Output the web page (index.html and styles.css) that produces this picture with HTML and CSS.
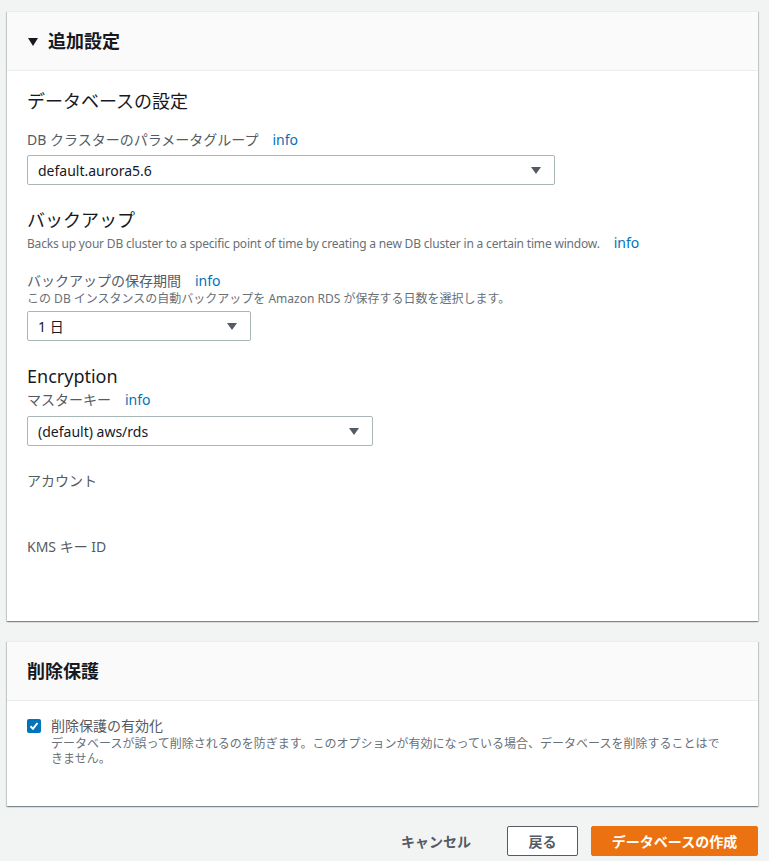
FILE: index.html
```html
<!DOCTYPE html>
<html lang="ja">
<head>
<meta charset="utf-8">
<title>追加設定</title>
<link rel="stylesheet" href="styles.css">
</head>
<body>
<div class="page">
  <section class="card">
    <header class="card-head">
      <svg class="caret" width="10" height="8" viewBox="0 0 10 8"><path d="M0 0H10L5 8Z" fill="#16191f"/></svg>
      <h2>追加設定</h2>
    </header>
    <div class="card-body first">
      <h3 class="sec">データベースの設定</h3>
      <div class="label gap-l">DB クラスターのパラメータグループ<a class="info">info</a></div>
      <div class="select w-full"><span>default.aurora5.6</span><svg width="10" height="7" viewBox="0 0 10 7"><path d="M0 0H10L5 7Z" fill="#545b64"/></svg></div>

      <h3 class="sec gap-xl">バックアップ</h3>
      <div class="desc en gap-s">Backs up your DB cluster to a specific point of time by creating a new DB cluster in a certain time window.<a class="info">info</a></div>
      <div class="label gap-m">バックアップの保存期間<a class="info">info</a></div>
      <div class="desc">この DB インスタンスの自動バックアップを Amazon RDS が保存する日数を選択します。</div>
      <div class="select w-small"><span>1 日</span><svg width="10" height="7" viewBox="0 0 10 7"><path d="M0 0H10L5 7Z" fill="#545b64"/></svg></div>

      <h3 class="sec gap-xl">Encryption</h3>
      <div class="label gap-xs">マスターキー<a class="info">info</a></div>
      <div class="select w-mid"><span>(default) aws/rds</span><svg width="10" height="7" viewBox="0 0 10 7"><path d="M0 0H10L5 7Z" fill="#545b64"/></svg></div>

      <div class="label gap-acct">アカウント</div>
      <div class="value"></div>
      <div class="label gap-kms">KMS キー ID</div>
      <div class="value"></div>
    </div>
  </section>

  <section class="card second">
    <header class="card-head">
      <h2>削除保護</h2>
    </header>
    <div class="card-body check-body">
      <div class="check-row">
        <span class="checkbox"><svg width="14" height="14" viewBox="0 0 14 14"><path d="M3.5 7.2L6 9.8L10.5 4" fill="none" stroke="#fff" stroke-width="2"/></svg></span>
        <div class="check-text">
          <div class="check-label">削除保護の有効化</div>
          <div class="check-desc">データベースが誤って削除されるのを防ぎます。このオプションが有効になっている場合、データベースを削除することはできません。</div>
        </div>
      </div>
    </div>
  </section>

  <footer class="actions">
    <button class="btn link">キャンセル</button>
    <button class="btn normal">戻る</button>
    <button class="btn primary">データベースの作成</button>
  </footer>
</div>
</body>
</html>
```
FILE: styles.css
```css
* { box-sizing: border-box; }
html, body { margin: 0; padding: 0; }
body {
  background: #f2f3f3;
  font-family: "Noto Sans", "Noto Sans CJK JP", sans-serif;
  color: #16191f;
  font-size: 14px;
}
.page {
  padding: 11px 11px 0 7px;
}
.card {
  background: #fff;
  border-top: 1px solid #eaeded;
  box-shadow: 0 1px 1px 0 rgba(0,28,36,.3), 1px 1px 1px 0 rgba(0,28,36,.15), -1px 1px 1px 0 rgba(0,28,36,.15);
}
.card.second { margin-top: 20px; }
.card-head {
  height: 59px;
  background: #fafafa;
  border-bottom: 1px solid #eaeded;
  display: flex;
  align-items: center;
  padding: 0 20px;
}
.caret { margin: 1px 10px 0 1px; }
.card-head h2 {
  margin: 0;
  font-size: 18px;
  font-weight: 700;
  line-height: 24px;
}
.card-body { padding: 18px 20px 64px 20px; }
.sec {
  margin: 0;
  font-size: 18px;
  font-weight: 400;
  line-height: 24px;
  color: #16191f;
}
.label {
  font-size: 14px;
  line-height: 20px;
  color: #545b64;
}
.info {
  color: #0073bb;
  margin-left: 14px;
  font-size: 14px;
  letter-spacing: 0;
}
.desc {
  font-size: 12px;
  line-height: 16px;
  color: #687078;
}
.desc.en { letter-spacing: -0.18px; }
.gap-xs { margin-top: 2px; }
.gap-s { margin-top: 3px; }
.gap-m { margin-top: 19px; }
.gap-l { margin-top: 17px; }
.gap-xl { margin-top: 23px; }
.gap-acct { margin-top: 25px; }
.gap-kms { margin-top: 46px; }
.select {
  margin-top: 5px;
  height: 30px;
  border: 1px solid #aab7b8;
  border-radius: 2px;
  display: flex;
  align-items: center;
  justify-content: space-between;
  padding: 0 13px 0 10px;
  font-size: 14px;
  color: #16191f;
}
.w-full { width: 528px; }
.w-small { width: 224px; margin-top: 4px; }
.w-mid { width: 346px; margin-top: 6px; }
.check-body { padding: 15px 20px 40px 20px; }
.check-row { display: flex; align-items: flex-start; }
.checkbox {
  width: 14px;
  height: 14px;
  margin-top: 3px;
  background: #0073bb;
  border-radius: 2px;
  display: flex;
  flex: none;
}
.check-text { margin-left: 10px; width: 676px; }
.check-label { font-size: 14px; line-height: 20px; color: #545b64; }
.check-desc { font-size: 12px; line-height: 15px; color: #687078; }
.actions {
  display: flex;
  justify-content: flex-end;
  align-items: center;
  padding: 20px 0 0 0;
  gap: 13px;
}
.btn {
  font-family: "Noto Sans", "Noto Sans CJK JP", sans-serif;
  font-weight: 700;
  font-size: 14px;
  height: 30px;
  border-radius: 2px;
  padding: 0 10px;
  white-space: nowrap;
  cursor: pointer;
}
.link {
  background: transparent;
  border: none;
  color: #545b64;
  padding: 0 20px;
  margin-right: 3px;
}
.normal {
  background: #fff;
  border: 1px solid #545b64;
  color: #545b64;
  width: 71px;
}
.primary {
  background: #ec7211;
  border: 1px solid #ec7211;
  color: #fff;
  width: 167px;
}
```
